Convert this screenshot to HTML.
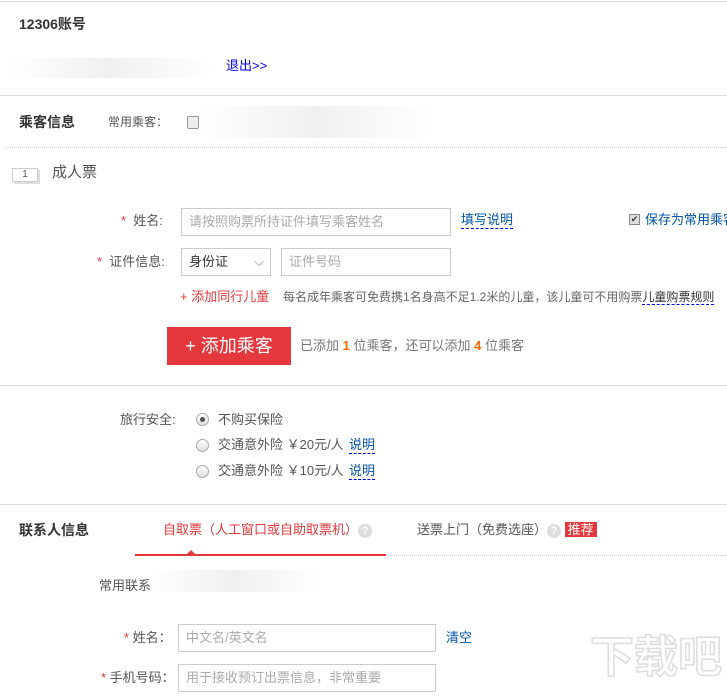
<!DOCTYPE html>
<html><head><meta charset="utf-8"><style>
*{margin:0;padding:0;box-sizing:border-box}
body{width:727px;height:697px;background:#fff;position:relative;overflow:hidden;font-family:"Liberation Sans","Noto Sans CJK SC",sans-serif;font-size:13px;color:#555}
.a{position:absolute;white-space:nowrap;line-height:16px}
.h{font-size:14px;font-weight:bold;color:#333}
.inp{position:absolute;border:1px solid #ccc;height:28px;color:#aaa;padding-left:7px;line-height:26px;font-size:13px}
.star{color:#e5383c}
.blue{color:#0055aa}
.dl{border-bottom:1px dashed #00f}
.radio{position:absolute;width:13px;height:13px;border-radius:50%;border:1px solid #aaa;background:linear-gradient(#fff,#ddd)}
.blur{position:absolute;background:linear-gradient(90deg,#fff,#f0f0f0 50%,#fff)}
</style></head><body>
<div class="a" style="left:0;top:1px;width:727px;border-top:1px solid #ddd"></div>
<div class="a h" style="left:19px;top:16px">12306账号</div>
<div class="blur" style="left:8px;top:58px;width:205px;height:20px"></div>
<div class="a" style="left:226px;top:58px;color:#00f">退出&gt;&gt;</div>
<div class="a" style="left:0;top:95px;width:727px;border-top:1px solid #ddd"></div>
<div class="a h" style="left:19px;top:114px">乘客信息</div>
<div class="a" style="left:108px;top:114px;font-size:12px">常用乘客：</div>
<div class="a" style="left:187px;top:116px;width:12px;height:13px;border:1px solid #999;border-radius:2px;background:#eee"></div>
<div class="blur" style="left:200px;top:106px;width:230px;height:32px"></div>
<div class="a" style="left:6px;top:147px;width:721px;border-top:1px dotted #ccc"></div>
<div class="a" style="left:12px;top:168px;width:26px;height:14px;border:1px solid #ccc;font-size:10px;text-align:center;line-height:12px;box-shadow:2px 2px 0 #ddd">1</div>
<div class="a" style="left:52px;top:165px;font-size:15px;color:#555">成人票</div>

<div class="a" style="left:121px;top:213px"><span class="star">*</span>&nbsp; 姓名:</div>
<div class="inp" style="left:181px;top:208px;width:270px">请按照购票所持证件填写乘客姓名</div>
<div class="a blue dl" style="left:461px;top:212px">填写说明</div>
<div class="a" style="left:629px;top:214px;width:11px;height:11px;border:1px solid #888;background:#ddd;font-size:9px;line-height:9px;text-align:center;color:#333">✔</div>
<div class="a blue" style="left:645px;top:212px">保存为常用乘客</div>

<div class="a" style="left:97px;top:254px"><span class="star">*</span>&nbsp; 证件信息:</div>
<div class="inp" style="left:181px;top:248px;width:90px;color:#333">身份证<span style="position:absolute;right:6px;color:#888">⌵</span></div>
<div class="inp" style="left:281px;top:248px;width:170px">证件号码</div>

<div class="a" style="left:180px;top:289px;color:#e5383c">+ 添加同行儿童</div>
<div class="a" style="left:283px;top:289px;font-size:12px;color:#666">每名成年乘客可免费携1名身高不足1.2米的儿童，该儿童可不用购票<span class="dl" style="color:#333">儿童购票规则</span></div>

<div class="a" style="left:167px;top:327px;width:124px;height:38px;background:#e5383c;color:#fff;font-size:18px;line-height:38px;text-align:center">+ 添加乘客</div>
<div class="a" style="left:300px;top:338px;color:#777">已添加 <b style="color:#f60">1</b> 位乘客，还可以添加 <b style="color:#f60">4</b> 位乘客</div>

<div class="a" style="left:0;top:385px;width:727px;border-top:1px solid #ddd"></div>
<div class="a" style="left:120px;top:412px">旅行安全:</div>
<div class="radio" style="left:196px;top:413px"><div style="width:5px;height:5px;border-radius:50%;background:#555;margin:3px"></div></div>
<div class="a" style="left:218px;top:412px">不购买保险</div>
<div class="radio" style="left:196px;top:439px"></div>
<div class="a" style="left:218px;top:437px">交通意外险 ￥20元/人</div>
<div class="a blue dl" style="left:349px;top:437px">说明</div>
<div class="radio" style="left:196px;top:465px"></div>
<div class="a" style="left:218px;top:463px">交通意外险 ￥10元/人</div>
<div class="a blue dl" style="left:349px;top:463px">说明</div>

<div class="a" style="left:0;top:504px;width:727px;border-top:1px solid #ddd"></div>
<div class="a h" style="left:19px;top:522px">联系人信息</div>
<div class="a" style="left:163px;top:522px;color:#e5383c">自取票（人工窗口或自助取票机）<span style="display:inline-block;width:14px;height:14px;border-radius:50%;background:#ddd;color:#fff;font-size:11px;text-align:center;line-height:14px;font-weight:bold">?</span></div>
<div class="a" style="left:417px;top:522px;color:#555">送票上门（免费选座）<span style="display:inline-block;width:14px;height:14px;border-radius:50%;background:#ddd;color:#fff;font-size:11px;text-align:center;line-height:14px;font-weight:bold">?</span> <span style="background:#e5383c;color:#fff;padding:0 3px">推荐</span></div>
<div class="a" style="left:135px;top:554px;width:251px;border-top:2px solid #e5383c"></div>
<div class="a" style="left:386px;top:555px;width:341px;border-top:1px dotted #ccc"></div>
<div class="a" style="left:186px;top:550px;width:0;height:0;border:5px solid transparent;border-bottom-color:#e5383c;border-top:0"></div>
<div class="a" style="left:99px;top:578px;color:#555">常用联系人</div>
<div class="blur" style="left:150px;top:570px;width:170px;height:22px"></div>

<div class="a" style="left:124px;top:630px"><span class="star">*</span> 姓名：</div>
<div class="inp" style="left:178px;top:624px;width:258px">中文名/英文名</div>
<div class="a blue" style="left:446px;top:630px">清空</div>
<div class="a" style="left:101px;top:670px"><span class="star">*</span> 手机号码：</div>
<div class="inp" style="left:178px;top:664px;width:258px">用于接收预订出票信息，非常重要</div>
<div class="a" style="left:590px;top:633px;font-size:44px;line-height:50px;color:#fff;-webkit-text-stroke:1.5px #ddd;font-weight:bold">下载吧</div>
</body></html>
